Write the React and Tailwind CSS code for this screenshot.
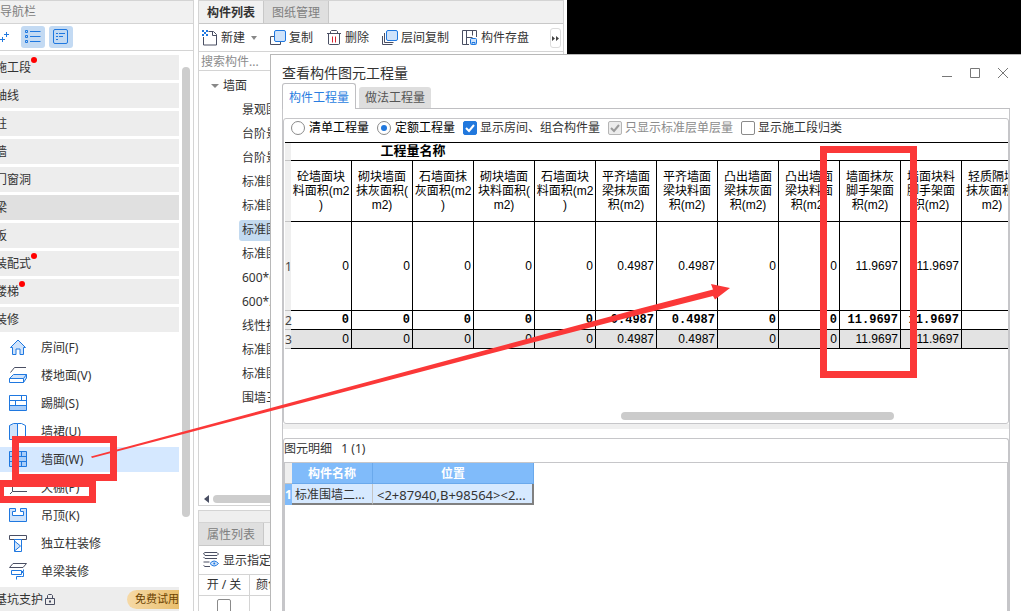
import React, { useState } from 'react';

const navGroups = [
  { name: '施工段', dot: true },
  { name: '轴线' },
  { name: '柱' },
  { name: '墙' },
  { name: '门窗洞' },
  { name: '梁', active: true },
  { name: '板' },
  { name: '装配式', dot: true },
  { name: '楼梯', dot: true },
  { name: '装修' },
];

const navItems = [
  { name: '房间(F)', icon: 'room' },
  { name: '楼地面(V)', icon: 'floor' },
  { name: '踢脚(S)', icon: 'skirting' },
  { name: '墙裙(U)', icon: 'dado' },
  { name: '墙面(W)', icon: 'wall' },
  { name: '天棚(P)', icon: 'ceiling' },
  { name: '吊顶(K)', icon: 'suspended' },
  { name: '独立柱装修', icon: 'column' },
  { name: '单梁装修', icon: 'beam' },
];

const treeItems = [
  '景观围墙', '台阶景墙', '台阶景墙', '标准围墙一', '标准围墙一', '标准围墙二', '标准围墙二',
  '600*600', '600*200', '线性排水', '标准围墙三', '标准围墙三', '围墙三',
];

const columns = [
  { lines: ['砼墙面块', '料面积(m2', ')'], value: '0' },
  { lines: ['砌块墙面', '抹灰面积(', 'm2)'], value: '0' },
  { lines: ['石墙面抹', '灰面积(m2', ')'], value: '0' },
  { lines: ['砌块墙面', '块料面积(', 'm2)'], value: '0' },
  { lines: ['石墙面块', '料面积(m2', ')'], value: '0' },
  { lines: ['平齐墙面', '梁抹灰面', '积(m2)'], value: '0.4987' },
  { lines: ['平齐墙面', '梁块料面', '积(m2)'], value: '0.4987' },
  { lines: ['凸出墙面', '梁抹灰面', '积(m2)'], value: '0' },
  { lines: ['凸出墙面', '梁块料面', '积(m2)'], value: '0' },
  { lines: ['墙面抹灰', '脚手架面', '积(m2)'], value: '11.9697' },
  { lines: ['墙面块料', '脚手架面', '积(m2)'], value: '11.9697' },
  { lines: ['轻质隔墙', '抹灰面积(', 'm2)'], value: '' },
];

const BLUE = '#1f78e0';
const DARK = '#4a4f63';
const PALE = '#cfe3fb';

const navIcons = {
  room: (
    <>
      <path d="M1.5 9.5 9 2l7.500 7.500H14.500V16.500h-3.500V11H7v5.500H3.500V9.500z" fill={PALE} stroke={BLUE} />
    </>
  ),
  floor: (
    <>
      <path d="M1.500 6.500 5.500 1.500H17" fill="none" stroke={DARK} />
      <path d="M.5 12.500 4.500 8.500h13v3.500l-3 4.500H.5z" fill={PALE} stroke={BLUE} />
      <path d="M1 12.500h13.500v3.500H1z" fill="#fff" />
      <path d="M.5 12.500h14l3-4M14.500 12.500v4" fill="none" stroke={BLUE} />
    </>
  ),
  skirting: (
    <>
      <path d="M.5 1.500h17v15H.5z" fill="#fff" stroke={BLUE} />
      <path d="M1 12h16v4H1z" fill="#a9cdf8" />
      <path d="M.5 6.500h17M.5 11.500h17M12.500 1.500v5M6.500 6.500v5" fill="none" stroke={BLUE} />
    </>
  ),
  dado: (
    <>
      <path d="M.5 3.500 4.500 1.500h4v16H.5z" fill={PALE} stroke={BLUE} />
      <path d="M8.500 1.500h4l4 2v14h-8z" fill="#fff" stroke={BLUE} />
    </>
  ),
  wall: (
    <>
      <path d="M.5 1.500h17v15H.5z" fill="#a9cdf8" stroke={BLUE} />
      <path d="M.5 6.500h17M.5 11.500h17M5.500 1.500v5M12.500 1.500v5M9.500 6.500v5M5.500 11.500v5M12.500 11.500v5" fill="none" stroke={BLUE} />
    </>
  ),
  ceiling: (
    <>
      <path d="M1 2.500 4.500 5h13M3.500 5v8.500L1 16M3.500 13.500H18" fill="none" stroke={DARK} />
    </>
  ),
  suspended: (
    <>
      <path d="M.5 2.500h6v3h-3v4h11v-4h-3v-3h6v13H.5z" fill={PALE} stroke={BLUE} />
    </>
  ),
  column: (
    <>
      <path d="M.5 1.500h17v4H.5z" fill="#fff" stroke={DARK} />
      <path d="M5.500 5.500h7v12h-7z" fill="#fff" stroke={BLUE} />
      <path d="m5.500 7 6 5-6 5z" fill={PALE} stroke={BLUE} />
    </>
  ),
  beam: (
    <>
      <path d="M.5 5.500 4 1.500h13.500L14 5.500z" fill="#fff" stroke={DARK} />
      <path d="M2.500 8.500h10v4h-10zM12.500 9.500h2v-2M12.500 14.500h-5v3" fill="none" stroke={BLUE} />
      <path d="M12.500 10.500h2v4h-2" fill="none" stroke={BLUE} />
    </>
  ),
};

const toolIcons = {
  create: (
    <>
      <path d="M6.500 1.500h5l3 3v10.500h-13V7" fill="none" stroke={DARK} />
      <path d="M10.500 1.500v4h4" fill="none" stroke={DARK} />
      <path d="M0 0h2v2H0zM4 0h2v2H4zM2 2h2v2H2zM0 4h2v2H0zM4 4h2v2H4z" fill={BLUE} />
    </>
  ),
  copy: (
    <>
      <path d="M4.500 6.500h-4v8h10v-3" fill="none" stroke={DARK} />
      <rect x="4.500" y=".5" width="11" height="11" rx="1.500" fill={PALE} stroke={BLUE} />
    </>
  ),
  remove: (
    <>
      <path d="M1 3.500h14M4.500 3.500v-2l1-1h5l1 1v2M2.500 3.500V14l1 .5h9l1-.5V3.500" fill="none" stroke={DARK} />
      <path d="M6.500 6.500v6M9.500 6.500v6" stroke="#d6232f" />
    </>
  ),
  layerCopy: (
    <>
      <path d="M.5 6v8.500h10M2.500 3v9.500h9" fill="none" stroke={DARK} />
      <rect x="4.500" y=".5" width="11" height="10" rx="1.500" fill={PALE} stroke={BLUE} />
    </>
  ),
  save: (
    <>
      <path d="M7 14.500H.5V.5h14V7M4.500 4v10.500M4.500 7.500h6M4.500 4V.5" fill="none" stroke={DARK} />
      <path d="M10.500.5v5" fill="none" stroke={DARK} />
      <rect x="8.500" y="8.500" width="6" height="6" rx="1" fill={PALE} stroke={BLUE} />
      <path d="M10 14.500v-2h3v2" fill="none" stroke={BLUE} />
    </>
  ),
};

const ToolButton = ({ icon, label, caret }) => (
  <button className="flex shrink-0 items-center gap-[3px] whitespace-nowrap">
    <svg className="h-4 w-4" viewBox="0 0 16 16">{toolIcons[icon]}</svg>
    {label}
    {caret && (
      <svg className="ml-[3px] h-1.5 w-1.5" viewBox="0 0 6 6"><path d="M0 1h6L3 5z" fill="#888" /></svg>
    )}
  </button>
);

const Radio = ({ label, checked, onChange }) => (
  <label className="flex items-center gap-1 whitespace-nowrap text-black">
    <input
      type="radio"
      name="quantity"
      checked={checked}
      onChange={onChange}
      className="h-3.5 w-3.5 appearance-none rounded-full border border-[#8a8a8a] bg-white bg-clip-content p-[3px] checked:bg-[#2178dd]"
    />
    {label}
  </label>
);

const Check = ({ label, checked, onChange, disabled }) => (
  <label className={`flex items-center gap-[3px] whitespace-nowrap ${disabled ? 'text-[#8c8c8c]' : 'text-[#333]'}`}>
    <span className="relative flex">
      <input
        type="checkbox"
        checked={checked}
        onChange={onChange}
        disabled={disabled}
        className="h-3.5 w-3.5 appearance-none rounded-[2px] border border-[#8a8a8a] bg-white checked:border-[#2178dd] checked:bg-[#2178dd] disabled:border-[#b5b5b5] disabled:bg-[#ececec]"
      />
      {checked && (
        <svg className="pointer-events-none absolute inset-0" viewBox="0 0 14 14">
          <path d="m3 7 3 3 5-6" fill="none" stroke={disabled ? '#9a9a9a' : '#fff'} strokeWidth="2" />
        </svg>
      )}
    </span>
    {label}
  </label>
);

const NavPanel = () => {
  const [selected, setSelected] = useState('墙面(W)');

  return (
    <aside className="flex w-[194px] shrink-0 flex-col border-t border-r border-[#d4d4d4]">
      <h2 className="h-[22px] shrink-0 bg-[#f1f1f1] leading-[22px] text-[#7d7d7d]">导航栏</h2>
      <div className="flex h-7 shrink-0 items-center gap-1 border-y border-[#d4d4d4]">
        <button aria-label="添加" className="mr-2">
          <svg className="h-4 w-[9px]" viewBox="0 0 9 16">
            <path d="M6.500 3v5M4 5.500h5M2.500 8v5M0 10.500h5" fill="none" stroke={BLUE} />
          </svg>
        </button>
        <button aria-label="列表" className="flex h-[22px] w-6 items-center justify-center rounded-[3px] bg-[#c3daf3]">
          <svg className="h-4 w-4" viewBox="0 0 16 16">
            <path d="M.5 1.500h2v2h-2zM.5 6.500h2v2h-2zM.5 11.500h2v2h-2zM5 2.500h10.500M5 7.500h10.500M5 12.500h10.500" fill="none" stroke={BLUE} />
          </svg>
        </button>
        <button aria-label="详情" className="flex h-[22px] w-6 items-center justify-center rounded-[3px] bg-[#c3daf3]">
          <svg className="h-4 w-4" viewBox="0 0 16 16">
            <rect x=".5" y=".5" width="14" height="14" rx="1.500" fill="none" stroke={BLUE} />
            <path d="M3 4.500h2M6 4.500h6M3 7.500h2M6 7.500h4M3 10.500h2" stroke={BLUE} />
          </svg>
        </button>
      </div>
      <div className="flex min-h-0 flex-1 gap-[3px] overflow-hidden pt-1">
        <nav className="-ml-[5px] flex w-[184px] flex-col gap-[3px]">
          {navGroups.map((group) => (
            <button
              key={group.name}
              className={`h-[25px] shrink-0 text-left ${group.active ? 'bg-[#e0e0e0]' : 'bg-[#ededed]'}`}
            >
              <span className="relative">
                {group.name}
                {group.dot && <i className="absolute -top-0.5 -right-1.5 h-1.5 w-1.5 rounded-full bg-[#f00]" />}
              </span>
            </button>
          ))}
          {navItems.map((item) => (
            <button
              key={item.name}
              onClick={() => setSelected(item.name)}
              className={`flex h-[25px] shrink-0 items-center gap-3.5 pl-3.5 ${selected === item.name ? 'bg-[#d5e8ff]' : ''}`}
            >
              <svg className="h-[17px] w-[18px]" viewBox="0 1 18 17">{navIcons[item.icon]}</svg>
              {item.name}
            </button>
          ))}
          <div className="flex h-[25px] shrink-0 items-center bg-[#ededed]">
            <button>基坑支护</button>
            <svg className="ml-0.5 h-[11px] w-2.5" viewBox="0 0 10 11">
              <path d="M.5 4.500h9v6h-9zM2.500 4.500v-3l1-1h3l1 1v3" fill="none" stroke={DARK} />
              <path d="M4 6.500h2v2H4z" fill={DARK} />
            </svg>
            <button className="ml-auto h-[19px] rounded-l-full bg-linear-to-r from-[#f6d9a6] to-[#eabf6c] pl-2 text-[11px] text-[#6b4200]">
              免费试用
            </button>
          </div>
        </nav>
        <div className="mt-3 h-[450px] w-2 rounded-full bg-[#cdcdcd]" />
      </div>
    </aside>
  );
};

const ListPanel = () => (
  <section className="flex w-[366px] shrink-0 flex-col gap-1">
    <div className="flex min-h-0 flex-1 flex-col border border-[#d4d4d4]">
      <div className="flex h-[23px] shrink-0 border-b border-[#c8c8c8] bg-[#f1f1f1]">
        <button className="border-r border-[#c8c8c8] px-2 pt-0.5 font-bold">构件列表</button>
        <button className="border-r border-[#c8c8c8] bg-[#dfdfdf] px-2 pt-0.5 text-[#808080]">图纸管理</button>
      </div>
      <div className="flex h-7 shrink-0 items-center gap-[13px] border-b border-[#d4d4d4] pt-px pl-[3px]">
        <ToolButton icon="create" label="新建" caret />
        <ToolButton icon="copy" label="复制" />
        <ToolButton icon="remove" label="删除" />
        <ToolButton icon="layerCopy" label="层间复制" />
        <ToolButton icon="save" label="构件存盘" />
        <button aria-label="更多" className="mr-0.5 ml-auto flex h-5 w-[11px] items-center justify-center rounded-[3px] border border-[#dcdcdc]">
          <svg className="h-[5px] w-[7px] shrink-0" viewBox="0 0 7 5"><path d="M0 0l3 2.500L0 5zM4 0l3 2.500L4 5z" fill="#444" /></svg>
        </button>
      </div>
      <input
        aria-label="搜索构件"
        placeholder="搜索构件..."
        className="h-[19px] shrink-0 border-b border-[#d4d4d4] pl-0.5 outline-none placeholder:text-[#8c8c8c]"
      />
      <ul className="min-h-0 flex-1 overflow-hidden pt-[3px]">
        <li className="flex h-6 items-center gap-1 pl-3">
          <svg className="h-1.5 w-2" viewBox="0 0 8 6"><path d="M0 1h8L4 5z" fill="#888" /></svg>
          墙面
        </li>
        {treeItems.map((name, index) => (
          <li key={index} className="flex h-6 items-center pl-10">
            <button className={`h-[21px] flex-1 rounded-[3px] pl-[3px] text-left ${index === 5 ? 'bg-[#c3daf0]' : ''}`}>{name}</button>
          </li>
        ))}
      </ul>
      <div className="flex h-4 shrink-0 items-center gap-1 pt-1 pl-[5px]">
        <svg className="h-2 w-[5px]" viewBox="0 0 5 8"><path d="M5 0v8L0 4z" fill={DARK} /></svg>
        <div className="h-2 w-72 rounded-full bg-[#cdcdcd]" />
      </div>
    </div>
    <div className="h-[101px] shrink-0 overflow-hidden border-x border-t border-[#d4d4d4]">
      <div className="h-3 border-b border-[#d4d4d4] bg-[#efefef]" />
      <div className="flex h-[23px] border-b border-[#c8c8c8] bg-[#f1f1f1]">
        <button className="border-r border-[#c8c8c8] bg-[#dfdfdf] px-2 pt-0.5 text-[#808080]">属性列表</button>
      </div>
      <div className="flex h-7 items-center gap-1 pl-1">
        <svg className="h-4 w-4" viewBox="0 0 16 16">
          <path d="M.5 1.500 2 .5h12l1.500 1.500L14 3.500H2zM14 6.500H2L.5 5M.5 10h6M.5 13.500 2 14.500h5" fill="none" stroke={DARK} />
          <path d="M7 11.500q4-5 8.500 0-4.500 5-8.500 0z" fill={PALE} stroke={BLUE} />
          <circle cx="11.250" cy="11.500" r="1" fill={BLUE} />
        </svg>
        <button className="pt-0.5">显示指定图层</button>
      </div>
      <table className="w-full table-fixed border-separate border-spacing-0">
        <thead>
          <tr>
            <th className="h-[22px] w-[51px] border-y border-r border-[#d4d4d4] font-normal">开 / 关</th>
            <th className="border-y border-[#d4d4d4] pl-1.5 text-left font-normal">颜色</th>
          </tr>
        </thead>
        <tbody>
          <tr>
            <td className="border-r border-[#d4d4d4] pt-[3px]">
              <input type="checkbox" aria-label="开关" className="mx-auto block h-3.5 w-3.5 appearance-none rounded-[2px] border border-[#8a8a8a]" />
            </td>
            <td />
          </tr>
        </tbody>
      </table>
    </div>
  </section>
);

const QuantityTable = () => (
  <table className="w-[738px] table-fixed border-separate border-spacing-0 font-['Liberation_Sans','Noto_Sans_CJK_SC',sans-serif] text-black">
    <colgroup>
      <col className="w-1.5" />
      {columns.map((_, index) => <col key={index} className="w-[61px]" />)}
    </colgroup>
    <thead>
      <tr className="h-[18px]">
        <td className="border-b border-[#c4c4c4] bg-[#efefef]" />
        <th colSpan={4} className="border-b border-black align-top text-[13px] leading-[15px]">工程量名称</th>
        <th colSpan={8} className="border-b border-black" />
      </tr>
      <tr className="h-[61px]">
        <td className="border-b border-[#c4c4c4] bg-[#efefef]" />
        {columns.map((column, index) => (
          <th key={index} className="border-r border-b border-black leading-[14px] font-normal whitespace-nowrap">
            {column.lines.map((line) => <div key={line}>{line}</div>)}
          </th>
        ))}
      </tr>
    </thead>
    <tbody>
      {['h-[89px]', 'h-[19px] font-bold font-["Liberation_Mono",monospace]', 'h-[19px] bg-[#e3e3e3]'].map((rowClass, row) => (
        <tr key={row} className={rowClass}>
          <th className="border-b border-[#c4c4c4] bg-[#efefef] pt-0.5 font-['Noto_Sans',sans-serif] leading-4 font-normal text-[#444]">
            {row + 1}
          </th>
          {columns.map((column, index) => (
            <td key={index} className="border-r border-b border-black pr-0.5 text-right leading-4">{column.value}</td>
          ))}
        </tr>
      ))}
    </tbody>
  </table>
);

const QuantityDialog = () => {
  const [mode, setMode] = useState('quota');
  const [showRoom, setShowRoom] = useState(true);
  const [showSection, setShowSection] = useState(false);

  return (
    <div role="dialog" aria-labelledby="dialog-title" className="absolute top-[54px] right-0 bottom-0 left-[270px] flex flex-col overflow-hidden border-t border-l border-[#b8b8b8] bg-white px-[11px]">
      <header className="flex h-7 shrink-0 items-center pt-2 pr-px">
        <h1 id="dialog-title" className="flex-1 text-sm leading-5">查看构件图元工程量</h1>
        <div className="flex gap-4">
          <button aria-label="最小化">
            <svg className="h-3 w-3" viewBox="0 0 12 12"><path d="M1 9.500h10" stroke="#777" /></svg>
          </button>
          <button aria-label="最大化">
            <svg className="h-3 w-3" viewBox="0 0 12 12"><path d="M1.500 1.500h9v9h-9z" fill="none" stroke="#777" /></svg>
          </button>
          <button aria-label="关闭">
            <svg className="h-3 w-3" viewBox="0 0 12 12"><path d="m1 1 10 10M11 1 1 11" stroke="#777" /></svg>
          </button>
        </div>
      </header>

      <div className="flex h-[26px] shrink-0">
        <button className="w-[74px] rounded-t-[3px] border-x border-t border-[#bfbfc2] pt-0.5 text-[#2a7de0]">构件工程量</button>
        <div className="flex flex-1 items-end border-b border-[#bfbfc2] pl-[3px]">
          <button className="h-[21px] w-[72px] rounded-t-[3px] bg-[#dedede] text-[#555]">做法工程量</button>
        </div>
      </div>

      <div className="flex min-h-0 flex-1 flex-col border-x border-[#c6c6c9] pt-[9px]">
        <section className="shrink-0 rounded-[3px] border border-[#c6c6c9]">
          <div className="flex h-[23px] items-center gap-2 pb-1.5 pl-[7px]">
            <Radio label="清单工程量" checked={mode === 'bill'} onChange={() => setMode('bill')} />
            <Radio label="定额工程量" checked={mode === 'quota'} onChange={() => setMode('quota')} />
            <Check label="显示房间、组合构件量" checked={showRoom} onChange={() => setShowRoom(!showRoom)} />
            <Check label="只显示标准层单层量" checked disabled />
            <Check label="显示施工段归类" checked={showSection} onChange={() => setShowSection(!showSection)} />
          </div>
          <div className="ml-px overflow-hidden border-t border-black">
            <QuantityTable />
          </div>
          <div className="mt-[63px] mr-[114px] mb-[3px] ml-auto h-2 w-[273px] rounded-full bg-[#cbcbcb]" />
        </section>

        <div className="mb-[9px] h-[5px] shrink-0 bg-[#efefef]" />

        <section className="flex flex-1 flex-col rounded-t-[3px] border-x border-t border-[#c6c6c9]">
          <h2 className="h-[23px] whitespace-pre leading-5">图元明细   1 (1)</h2>
          <div className="flex-1 border-x border-t border-[#c6c6c9]">
            <table className="w-[249px] table-fixed border-separate border-spacing-0">
              <thead>
                <tr className="h-[21px] bg-[#80bbfa] text-white">
                  <td className="w-[7px] border-b border-[#c4c4c4] bg-[#efefef]" />
                  <th className="w-[81px] border-r border-b border-[#6aa9ec] pt-0.5 leading-4">构件名称</th>
                  <th className="border-r border-b border-[#6aa9ec] pt-0.5 leading-4">位置</th>
                </tr>
              </thead>
              <tbody>
                <tr className="h-[21px] bg-[#d6e9ff]">
                  <th className="bg-[#80bbfa] leading-4 text-white">1</th>
                  <td className="border-r border-b-2 border-r-[#c4c4c4] border-b-[#808080] pt-0.5 pl-[3px] leading-4 whitespace-nowrap">标准围墙二...</td>
                  <td className="border-r-2 border-b-2 border-[#808080] pt-0.5 pl-1 text-[13px] leading-4 whitespace-nowrap">&lt;2+87940,B+98564&gt;&lt;2...</td>
                </tr>
              </tbody>
            </table>
          </div>
        </section>
      </div>
    </div>
  );
};

// Red marks drawn over the screen
const Annotations = () => (
  <svg className="pointer-events-none absolute top-0 left-0 h-[611px] w-[1021px]" viewBox="0 0 1021 611">
    <g fill="none" stroke="#fb3838" strokeWidth="7">
      <rect x="15.500" y="439.500" width="98" height="38" />
      <rect x=".5" y="483.500" width="92" height="16" />
      <rect x="823.500" y="149.500" width="90" height="225" />
    </g>
    <path d="M91 456.500 640 308.500 713 289.500 711 284 730 288 715 299.500 713 296 640 314.500 92 458z" fill="#fb3838" />
  </svg>
);

const App = () => (
  <div className="relative flex h-screen overflow-hidden bg-white font-['Noto_Sans','Noto_Sans_CJK_SC',sans-serif] text-xs text-[#333]">
    <NavPanel />
    <div className="w-1 shrink-0" />
    <ListPanel />
    <div className="ml-[3px] flex-1 bg-black" />
    <QuantityDialog />
    <Annotations />
  </div>
);

export default App;
